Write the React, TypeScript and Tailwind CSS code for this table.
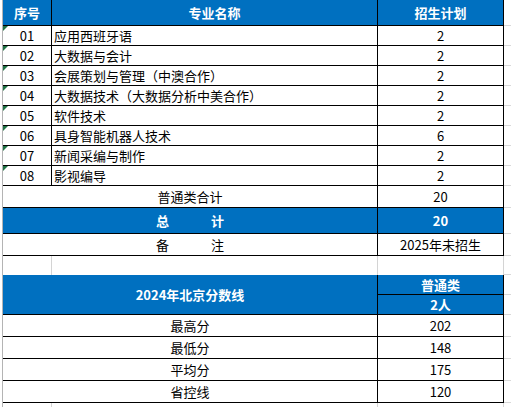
import React from "react";

const data: [string, string, string][] = [
  ["01", "应用西班牙语", "2"],
  ["02", "大数据与会计", "2"],
  ["03", "会展策划与管理（中澳合作）", "2"],
  ["04", "大数据技术（大数据分析中美合作）", "2"],
  ["05", "软件技术", "2"],
  ["06", "具身智能机器人技术", "6"],
  ["07", "新闻采编与制作", "2"],
  ["08", "影视编导", "2"],
];

const scores: [string, string][] = [
  ["最高分", "202"],
  ["最低分", "148"],
  ["平均分", "175"],
  ["省控线", "120"],
];

function Tri() {
  return (
    <div className="absolute top-0 left-0 w-0 h-0 border-t-[5px] border-t-[#217346] border-r-[5px] border-r-transparent" />
  );
}

export default function App() {
  return (
    <div className="w-[511px] h-[407px] overflow-hidden bg-white flex font-['Noto_Sans_CJK_SC',sans-serif] text-[13px] leading-none text-black">
      <div className="w-[2px] shrink-0" />
      <div className="w-px shrink-0 bg-[#b4b4b4]" />
      <div className="flex-1 flex flex-col">
        {/* header */}
        <div className="flex h-[26px] shrink-0">
          <div className="w-[49px] bg-[#0070c0] border-r border-b border-black text-white font-bold flex items-center justify-center">序号</div>
          <div className="w-[326px] bg-[#0070c0] border-r border-b border-black text-white font-bold flex items-center justify-center">专业名称</div>
          <div className="w-[126px] bg-[#0070c0] border-r border-b border-black text-white font-bold flex items-center justify-center">招生计划</div>
          <div className="flex-1 border-b border-[#d9d9d9]" />
        </div>
        {data.map(([n, name, c]) => (
          <div key={n} className="flex h-[20px] shrink-0">
            <div className="relative w-[49px] border-r border-b border-black flex items-center justify-center">
              <Tri />
              {n}
            </div>
            <div className="w-[326px] border-r border-b border-black flex items-center pl-[2px] whitespace-nowrap">{name}</div>
            <div className="w-[126px] border-r border-b border-black flex items-center justify-center">{c}</div>
            <div className="flex-1 border-b border-[#d9d9d9]" />
          </div>
        ))}
        {/* 普通类合计 */}
        <div className="flex h-[22px] shrink-0">
          <div className="w-[375px] border-r border-b border-black flex items-center justify-center">普通类合计</div>
          <div className="w-[126px] border-r border-b border-black flex items-center justify-center">20</div>
          <div className="flex-1 border-b border-[#d9d9d9]" />
        </div>
        {/* 总计 */}
        <div className="flex h-[26px] shrink-0">
          <div className="w-[375px] bg-[#0070c0] border-r border-b border-black text-white font-bold flex items-center justify-center gap-[42px]">
            <span>总</span>
            <span>计</span>
          </div>
          <div className="w-[126px] bg-[#0070c0] border-r border-b border-black text-white font-bold flex items-center justify-center">20</div>
          <div className="flex-1 border-b border-[#d9d9d9]" />
        </div>
        {/* 备注 */}
        <div className="flex h-[22px] shrink-0">
          <div className="w-[375px] border-r border-b border-black flex items-center justify-center gap-[42px]">
            <span>备</span>
            <span>注</span>
          </div>
          <div className="w-[126px] border-r border-b border-black flex items-center justify-center">2025年未招生</div>
          <div className="flex-1 border-b border-[#d9d9d9]" />
        </div>
        {/* blank row */}
        <div className="flex h-[19px] shrink-0">
          <div className="w-[49px] border-r border-[#d4d4d4]" />
          <div className="w-[326px] border-r border-[#d4d4d4]" />
          <div className="w-[126px] border-r border-[#d4d4d4]" />
          <div className="flex-1 border-b border-[#d9d9d9]" />
        </div>
        {/* table 2 header */}
        <div className="flex h-[40px] shrink-0">
          <div className="w-[375px] bg-[#0070c0] border-r border-b border-black text-white font-bold flex items-center justify-center">2024年北京分数线</div>
          <div className="w-[126px] flex flex-col">
            <div className="h-[20px] bg-[#0070c0] border-r border-b border-black text-white font-bold flex items-center justify-center">普通类</div>
            <div className="h-[20px] bg-[#0070c0] border-r border-b border-black text-white font-bold flex items-center justify-center">2人</div>
          </div>
          <div className="flex-1 flex flex-col">
            <div className="h-[20px] border-b border-[#d9d9d9]" />
            <div className="h-[20px] border-b border-[#d9d9d9]" />
          </div>
        </div>
        {scores.map(([k, v]) => (
          <div key={k} className="flex h-[22px] shrink-0">
            <div className="w-[375px] border-r border-b border-black flex items-center justify-center">{k}</div>
            <div className="w-[126px] border-r border-b border-black flex items-center justify-center">{v}</div>
            <div className="flex-1 border-b border-[#d9d9d9]" />
          </div>
        ))}
        <div className="flex h-[20px] shrink-0">
          <div className="w-[49px] border-r border-[#d4d4d4]" />
          <div className="w-[326px] border-r border-[#d4d4d4]" />
          <div className="w-[126px] border-r border-[#d4d4d4]" />
          <div className="flex-1" />
        </div>
      </div>
    </div>
  );
}
